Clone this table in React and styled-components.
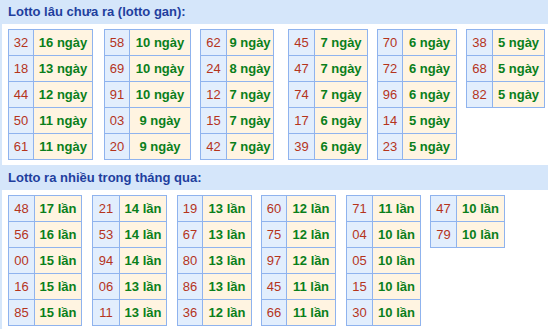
import React from 'react'
import styled, { createGlobalStyle } from 'styled-components'

const GlobalStyle = createGlobalStyle`
    body {
        margin: 0;
        background: #ffffff;
        font-family: "Liberation Sans", Arial, sans-serif;
        overflow: hidden;
    }
`

const Wrapper = styled.div`
    margin-top: -1px;
    border-left: 2px solid #d5e6fa;
    width: 546px;
`
const Header = styled.div`
    height: 25px;
    display: flex;
    align-items: center;
    padding-left: 6px;
    background: #d5e6fa;
    color: #1f3f9e;
    font-size: 13px;
    font-weight: bold;
`
const TableRow = styled.div`
    display: flex;
    align-items: flex-start;
    padding: 5px 0 5px 6px;
`
const Table = styled.div`
    display: grid;
    grid-template-columns: ${p => p.$num}px ${p => p.$val}px;
    border-top: 1px solid #8fb3ee;
    border-left: 1px solid #8fb3ee;
    margin-right: ${p => p.$mr}px;
`
const Cell = styled.div`
    height: 26px;
    box-sizing: border-box;
    border-right: 1px solid #8fb3ee;
    border-bottom: 1px solid #8fb3ee;
    display: flex;
    align-items: center;
    justify-content: center;
    font-size: 13px;
`
const NumCell = styled(Cell)`
    background: #e2eefd;
    color: #b5341c;
`
const ValCell = styled(Cell)`
    background: #fff4e1;
    color: #0a7f1b;
    font-weight: bold;
`

const gan = [
    { num: 25, val: 59, mr: 11, rows: [['32', 16], ['18', 13], ['44', 12], ['50', 11], ['61', 11]] },
    { num: 25, val: 61, mr: 9, rows: [['58', 10], ['69', 10], ['91', 10], ['03', 9], ['20', 9]] },
    { num: 26, val: 47, mr: 14, rows: [['62', 9], ['24', 8], ['12', 7], ['15', 7], ['42', 7]] },
    { num: 26, val: 53, mr: 9, rows: [['45', 7], ['47', 7], ['74', 7], ['17', 6], ['39', 6]] },
    { num: 25, val: 54, mr: 9, rows: [['70', 6], ['72', 6], ['96', 6], ['14', 5], ['23', 5]] },
    { num: 26, val: 52, mr: 0, rows: [['38', 5], ['68', 5], ['82', 5]] },
]

const nhieu = [
    { num: 26, val: 47, mr: 10, rows: [['48', 17], ['56', 16], ['00', 15], ['16', 15], ['85', 15]] },
    { num: 27, val: 47, mr: 10, rows: [['21', 14], ['53', 14], ['94', 14], ['06', 13], ['11', 13]] },
    { num: 25, val: 49, mr: 9, rows: [['19', 13], ['67', 13], ['80', 13], ['86', 13], ['36', 12]] },
    { num: 25, val: 49, mr: 10, rows: [['60', 12], ['75', 12], ['97', 12], ['45', 11], ['66', 11]] },
    { num: 26, val: 48, mr: 9, rows: [['71', 11], ['04', 10], ['05', 10], ['15', 10], ['30', 10]] },
    { num: 26, val: 48, mr: 0, rows: [['47', 10], ['79', 10]] },
]

const LottoTable = ({ table, unit }) => (
    <Table $num={table.num} $val={table.val} $mr={table.mr}>
        {table.rows.map(([n, v]) => (
            <React.Fragment key={n}>
                <NumCell>{n}</NumCell>
                <ValCell>{v} {unit}</ValCell>
            </React.Fragment>
        ))}
    </Table>
)

const Section = ({ title, tables, unit }) => (
    <>
        <Header>{title}</Header>
        <TableRow>
            {tables.map((t, i) => <LottoTable key={i} table={t} unit={unit} />)}
        </TableRow>
    </>
)

const App = () => {
    return (
        <Wrapper>
            <GlobalStyle />
            <Section title="Lotto lâu chưa ra (lotto gan):" tables={gan} unit="ngày" />
            <Section title="Lotto ra nhiều trong tháng qua:" tables={nhieu} unit="lần" />
        </Wrapper>
    )
}

export default App
